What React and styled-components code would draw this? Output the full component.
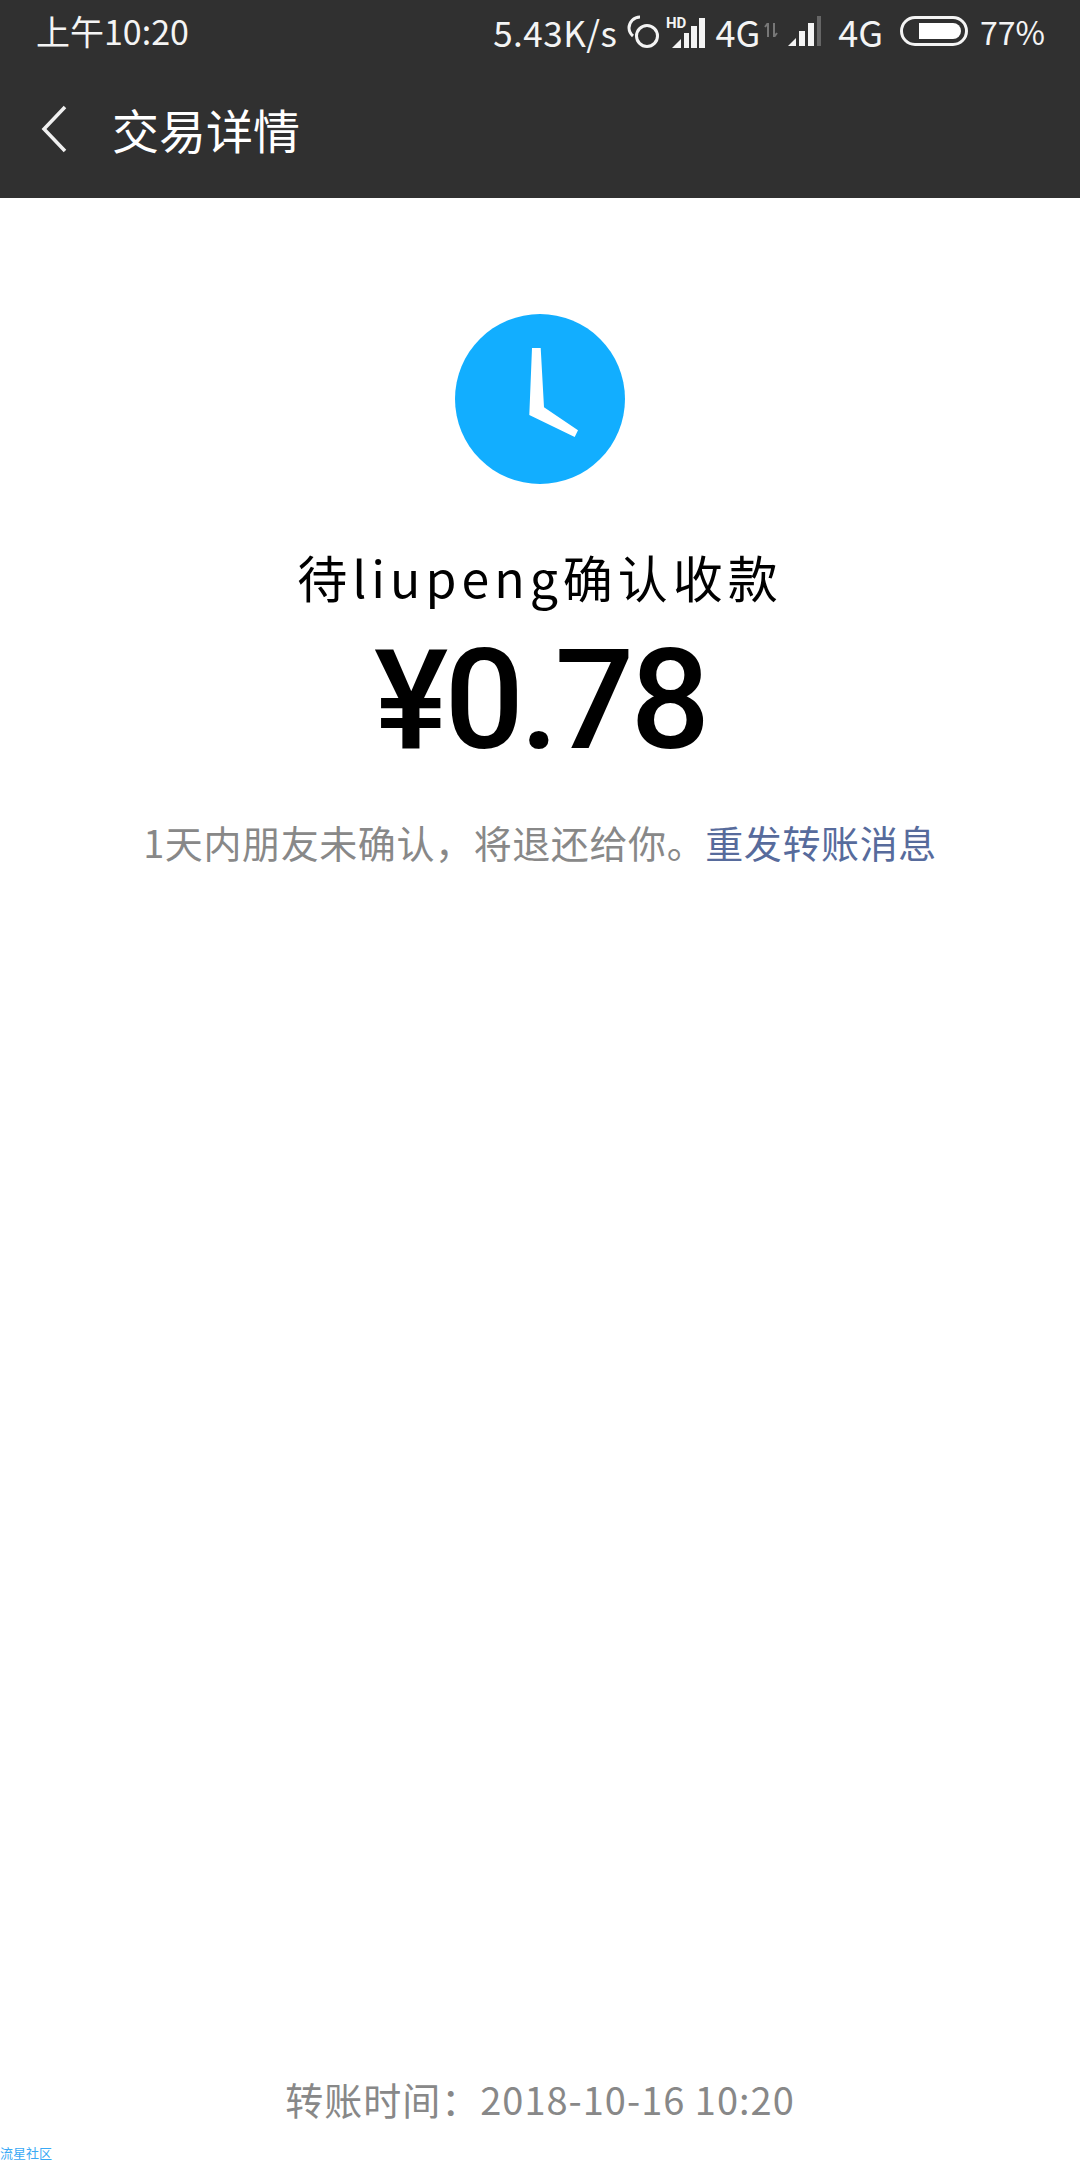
import React from "react";
import styled, { createGlobalStyle } from "styled-components";

const cjk = `"Noto Sans CJK SC", "Noto Sans", sans-serif`;

const GlobalStyle = createGlobalStyle`
  html, body {
    margin: 0;
    padding: 0;
    background: #fff;
  }
`;

const Page = styled.div`
  width: 1080px;
  height: 2160px;
  display: flex;
  flex-direction: column;
  background: #fff;
  overflow: hidden;
  font-family: ${cjk};
`;

const TopBar = styled.header`
  height: 198px;
  flex: none;
  background: #303030;
  color: #f4f4f4;
  display: flex;
  flex-direction: column;
`;

const StatusBar = styled.div`
  height: 62px;
  padding: 0 35px 0 36px;
  display: flex;
  align-items: center;
  justify-content: space-between;
`;

const StatusTime = styled.span`
  font-size: 34px;
  line-height: 1;
`;

const StatusRight = styled.div`
  display: flex;
  align-items: center;
`;

const StatusText = styled.span`
  font-size: ${(p) => p.$size || 36}px;
  line-height: 1;
  letter-spacing: ${(p) => p.$spacing || 0}px;
  margin-left: ${(p) => p.$left || 0}px;
`;

const StatusIcon = styled.svg`
  display: block;
  flex: none;
  margin-left: ${(p) => p.$left || 0}px;
`;

const ArrowsIcon = styled(StatusIcon)`
  align-self: flex-end;
  margin-bottom: 12px;
`;

const NavBar = styled.div`
  flex: 1;
  display: flex;
  align-items: center;
  padding: 0 0 3px 41px;
`;

const NavTitle = styled.h1`
  margin: 0 0 0 45px;
  font-size: 47px;
  line-height: 1;
  font-weight: 400;
  color: #fff;
`;

const Main = styled.main`
  flex: 1;
  display: flex;
  flex-direction: column;
  align-items: center;
  padding-top: 116px;
`;

const ClockBadge = styled.svg`
  display: block;
  margin-bottom: 60px;
`;

const Title = styled.h2`
  margin: 0;
  font-size: 50px;
  line-height: 64px;
  letter-spacing: 5px;
  font-weight: 400;
  color: #000;
`;

const Amount = styled.div`
  margin-top: 7px;
  font-family: Roboto, "Liberation Sans", sans-serif;
  font-size: 140px;
  line-height: 170px;
  letter-spacing: -4px;
  font-weight: 500;
  color: #000;
`;

const Notice = styled.p`
  margin: 31px 0 0;
  font-size: 38px;
  line-height: 52px;
  letter-spacing: 0.6px;
  color: #888;
  white-space: nowrap;
`;

const ResendLink = styled.a`
  color: #576b9c;
  text-decoration: none;
`;

const TransferTime = styled.div`
  margin-top: auto;
  padding-bottom: 23px;
  font-size: 38px;
  line-height: 48px;
  letter-spacing: 1px;
  color: #888;
`;

const Watermark = styled.div`
  height: 14px;
  font-size: 13px;
  line-height: 14px;
  color: #3aa9f5;
`;

const SignalIcon = () => (
  <StatusIcon $left={10} width="33" height="30" viewBox="0 0 33 30">
    <path d="M0 30 L8 22 V30 Z" fill="#f4f4f4" />
    <rect x="11" y="15" width="6" height="15" fill="#f4f4f4" />
    <rect x="20" y="7" width="6" height="23" fill="#f4f4f4" />
    <rect x="29" y="0" width="4" height="30" fill="#666" />
  </StatusIcon>
);

const HdSignal = () => (
  <StatusIcon $left={7} width="39" height="34" viewBox="0 -2 39 34">
    <text x="0" y="12" fontSize="15" fontWeight="700" fontFamily="Roboto, sans-serif" fill="#f4f4f4">HD</text>
    <path d="M6 32 L15 23 V32 Z" fill="#f4f4f4" />
    <rect x="18" y="17" width="5" height="15" fill="#f4f4f4" />
    <rect x="25" y="10" width="6" height="22" fill="#f4f4f4" />
    <rect x="33" y="2" width="6" height="30" fill="#f4f4f4" />
  </StatusIcon>
);

const App = () => (
  <Page>
    <GlobalStyle />
    <TopBar>
      <StatusBar>
        <StatusTime>上午10:20</StatusTime>
        <StatusRight>
          <StatusText $size={35} $spacing={0.5}>5.43K/s</StatusText>
          <StatusIcon $left={9} width="33" height="34" viewBox="0 0 33 34">
            <circle cx="21" cy="22" r="10.5" fill="none" stroke="#f4f4f4" strokeWidth="3" />
            <path d="M14 3 A11 11 0 0 0 3 14 A11 11 0 0 0 7 22" fill="none" stroke="#f4f4f4" strokeWidth="3" />
          </StatusIcon>
          <HdSignal />
          <StatusText $left={10}>4G</StatusText>
          <ArrowsIcon $left={4} width="14" height="14" viewBox="0 0 14 14">
            <path d="M4 0 V14 M1 4 L4 0 M10 14 V0 M10 14 L13 10" stroke="#777" strokeWidth="2" fill="none" />
          </ArrowsIcon>
          <SignalIcon />
          <StatusText $left={17}>4G</StatusText>
          <StatusIcon $left={17} width="68" height="30" viewBox="0 0 68 30">
            <rect x="1.5" y="1.5" width="65" height="27" rx="13.5" fill="none" stroke="#f4f4f4" strokeWidth="3" />
            <path d="M19 7 H53 A8 8 0 0 1 61 15 A8 8 0 0 1 53 23 H19 Z" fill="#fff" />
          </StatusIcon>
          <StatusText $left={12} $size={32}>77%</StatusText>
        </StatusRight>
      </StatusBar>
      <NavBar>
        <svg width="26" height="48" viewBox="0 0 26 48">
          <path d="M24 2 L3 24 L24 46" fill="none" stroke="#f0f0f0" strokeWidth="3.5" />
        </svg>
        <NavTitle>交易详情</NavTitle>
      </NavBar>
    </TopBar>
    <Main>
      <ClockBadge width="170" height="170" viewBox="0 0 170 170">
        <circle cx="85" cy="85" r="85" fill="#12aeff" />
        <polygon points="77,34 85.7,34 89,93.3 123,116.3 119.7,123 74.3,101" fill="#fff" />
      </ClockBadge>
      <Title>待liupeng确认收款</Title>
      <Amount>¥0.78</Amount>
      <Notice>
        1天内朋友未确认，将退还给你。<ResendLink href="#">重发转账消息</ResendLink>
      </Notice>
      <TransferTime>转账时间：2018-10-16 10:20</TransferTime>
    </Main>
    <Watermark>流星社区</Watermark>
  </Page>
);

export default App;
